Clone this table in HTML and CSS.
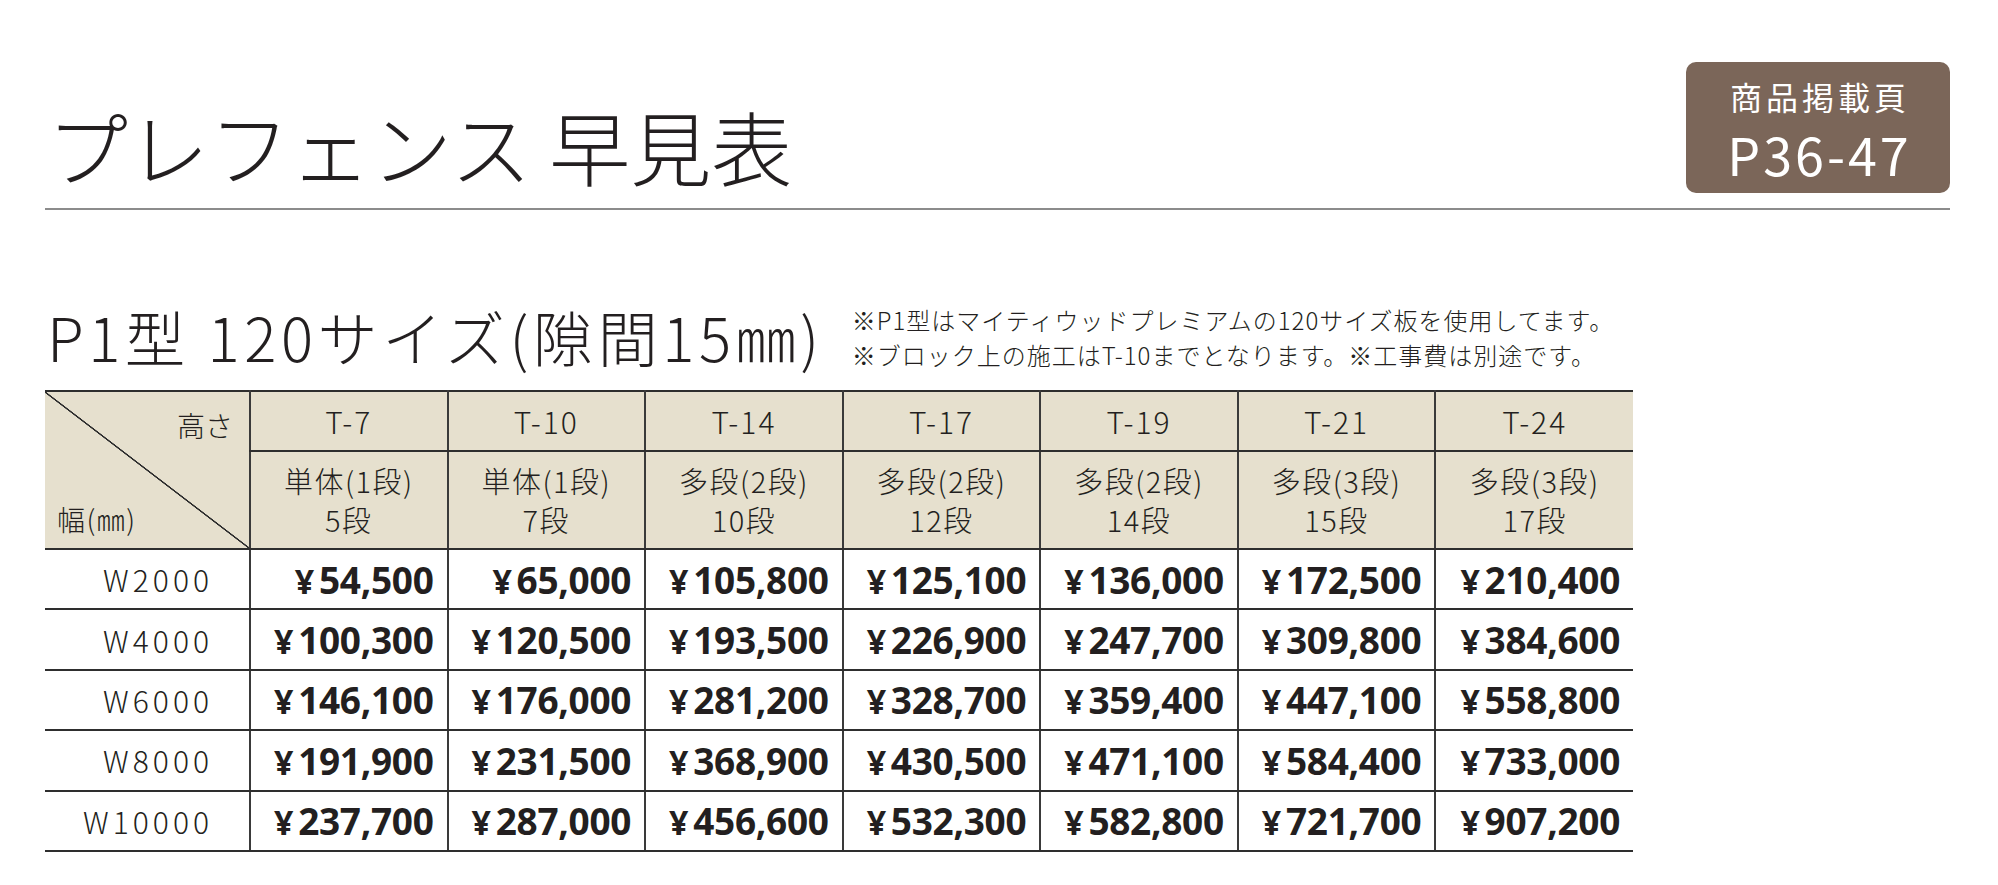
FILE: index.html
```html
<!DOCTYPE html>
<html lang="ja">
<head>
<meta charset="utf-8">
<title>プレフェンス 早見表</title>
<link rel="stylesheet" href="styles.css">
</head>
<body>
<header class="top">
  <h1 class="title">プレフェンス 早見表</h1>
  <div class="badge">
    <div class="badge-label">商品掲載頁</div>
    <div class="badge-pages">P36-47</div>
  </div>
</header>

<section class="subhead">
  <h2 class="subtitle">P1型 120サイズ(隙間15㎜)</h2>
  <div class="notes">
    <p>※P1型はマイティウッドプレミアムの120サイズ板を使用してます。</p>
    <p>※ブロック上の施工はT-10までとなります。※工事費は別途です。</p>
  </div>
</section>

<table class="price">
  <colgroup>
    <col class="c-label">
    <col><col><col><col><col><col><col>
  </colgroup>
  <thead>
    <tr class="h1row">
      <th class="corner" rowspan="2">
        <div class="corner-in">
          <span class="corner-top">高さ</span>
          <span class="corner-bot">幅(㎜)</span>
        </div>
      </th>
      <th class="hsize">T-7</th>
      <th class="hsize">T-10</th>
      <th class="hsize">T-14</th>
      <th class="hsize">T-17</th>
      <th class="hsize">T-19</th>
      <th class="hsize">T-21</th>
      <th class="hsize">T-24</th>
    </tr>
    <tr class="h2row">
      <th class="htype">単体(1段)<br>5段</th>
      <th class="htype">単体(1段)<br>7段</th>
      <th class="htype">多段(2段)<br>10段</th>
      <th class="htype">多段(2段)<br>12段</th>
      <th class="htype">多段(2段)<br>14段</th>
      <th class="htype">多段(3段)<br>15段</th>
      <th class="htype">多段(3段)<br>17段</th>
    </tr>
  </thead>
  <tbody>
    <tr>
      <th class="rlabel">W2000</th>
      <td><span class="yen">¥</span>54,500</td><td><span class="yen">¥</span>65,000</td><td><span class="yen">¥</span>105,800</td><td><span class="yen">¥</span>125,100</td><td><span class="yen">¥</span>136,000</td><td><span class="yen">¥</span>172,500</td><td><span class="yen">¥</span>210,400</td>
    </tr>
    <tr>
      <th class="rlabel">W4000</th>
      <td><span class="yen">¥</span>100,300</td><td><span class="yen">¥</span>120,500</td><td><span class="yen">¥</span>193,500</td><td><span class="yen">¥</span>226,900</td><td><span class="yen">¥</span>247,700</td><td><span class="yen">¥</span>309,800</td><td><span class="yen">¥</span>384,600</td>
    </tr>
    <tr>
      <th class="rlabel">W6000</th>
      <td><span class="yen">¥</span>146,100</td><td><span class="yen">¥</span>176,000</td><td><span class="yen">¥</span>281,200</td><td><span class="yen">¥</span>328,700</td><td><span class="yen">¥</span>359,400</td><td><span class="yen">¥</span>447,100</td><td><span class="yen">¥</span>558,800</td>
    </tr>
    <tr>
      <th class="rlabel">W8000</th>
      <td><span class="yen">¥</span>191,900</td><td><span class="yen">¥</span>231,500</td><td><span class="yen">¥</span>368,900</td><td><span class="yen">¥</span>430,500</td><td><span class="yen">¥</span>471,100</td><td><span class="yen">¥</span>584,400</td><td><span class="yen">¥</span>733,000</td>
    </tr>
    <tr>
      <th class="rlabel">W10000</th>
      <td><span class="yen">¥</span>237,700</td><td><span class="yen">¥</span>287,000</td><td><span class="yen">¥</span>456,600</td><td><span class="yen">¥</span>532,300</td><td><span class="yen">¥</span>582,800</td><td><span class="yen">¥</span>721,700</td><td><span class="yen">¥</span>907,200</td>
    </tr>
  </tbody>
</table>
</body>
</html>
```

FILE: styles.css
```css
html, body {
  margin: 0;
  padding: 0;
  background: #ffffff;
}
body {
  font-family: "Noto Sans CJK JP", "Noto Sans", sans-serif;
  color: #231f20;
  width: 1998px;
  height: 885px;
  overflow: hidden;
}

/* ---------- header ---------- */
.top {
  display: flex;
  justify-content: space-between;
  align-items: flex-end;
  margin: 0 48px 0 45px;
  padding-top: 62px;
  padding-bottom: 15px;
  border-bottom: 2px solid #8c8c8c;
}
.title {
  margin: 0 0 8px 2px;
  font-size: 81px;
  font-weight: 300;
  line-height: 1;
  letter-spacing: 0;
  color: #231f20;
}
.badge {
  box-sizing: border-box;
  width: 264px;
  height: 131px;
  padding-top: 14px;
  background: #7b6659;
  border-radius: 10px;
  color: #ffffff;
  display: flex;
  flex-direction: column;
  align-items: center;
}
.badge-label {
  font-size: 32px;
  line-height: 40px;
  letter-spacing: 4px;
  margin-right: -4px;
}
.badge-pages {
  margin-top: 10px;
  font-size: 52px;
  line-height: 56px;
  letter-spacing: 3px;
  margin-right: -3px;
}

/* ---------- sub heading ---------- */
.subhead {
  display: flex;
  align-items: flex-end;
  margin: 92px 0 0 45px;
  gap: 28px;
}
.subtitle {
  margin: 0 0 6px 2px;
  font-size: 60px;
  font-weight: 300;
  line-height: 1;
  letter-spacing: 4.6px;
  color: #231f20;
}
.notes {
  font-size: 24px;
  font-weight: 300;
  line-height: 35px;
  letter-spacing: 1px;
  color: #231f20;
}
.notes p {
  margin: 0;
}

/* ---------- table ---------- */
.price {
  margin: 18px 0 0 45px;
  width: 1588px;
  table-layout: fixed;
  border-collapse: collapse;
  border-top: 2px solid #2e2e2e;
}
.c-label {
  width: 205px;
}
.price th,
.price td {
  padding: 0;
  border-bottom: 2px solid #2e2e2e;
  border-left: 2px solid #3a3a3a;
}
.price th.corner,
.price th.rlabel {
  border-left: none;
}
.h1row {
  height: 60px;
}
.h2row {
  height: 98px;
}
thead th {
  background: #e6e0ce;
  font-weight: 300;
  color: #231f20;
}
.corner {
  background: #e6e0ce linear-gradient(to top right, transparent calc(50% - 1px), #2e2e2e calc(50% - 0.5px), #2e2e2e calc(50% + 0.5px), transparent calc(50% + 1px));
  vertical-align: top;
}
.corner-in {
  height: 156px;
  display: flex;
  flex-direction: column;
  justify-content: space-between;
  padding: 14px 16px 10px 12px;
  box-sizing: border-box;
  font-size: 28px;
  line-height: 38px;
}
.corner-top {
  align-self: flex-end;
}
.corner-bot {
  align-self: flex-start;
  letter-spacing: 1.5px;
}
.hsize {
  font-size: 30px;
  line-height: 1;
  letter-spacing: 2px;
  text-align: center;
}
.htype {
  font-size: 29px;
  line-height: 39px;
  letter-spacing: 1.5px;
  text-align: center;
}
tbody tr {
  height: 60.4px;
}
.rlabel {
  text-align: right;
  padding-right: 36px !important;
  font-size: 30px;
  font-weight: 300;
  letter-spacing: 4px;
  background: #ffffff;
}
tbody td {
  text-align: right;
  padding-right: 13px !important;
  font-family: "Noto Sans", "Open Sans", sans-serif;
  font-weight: 700;
  font-size: 37px;
  line-height: 1;
  letter-spacing: -0.3px;
  color: #231f20;
}
.yen {
  margin-right: 5px;
  font-size: 34px;
}
```
